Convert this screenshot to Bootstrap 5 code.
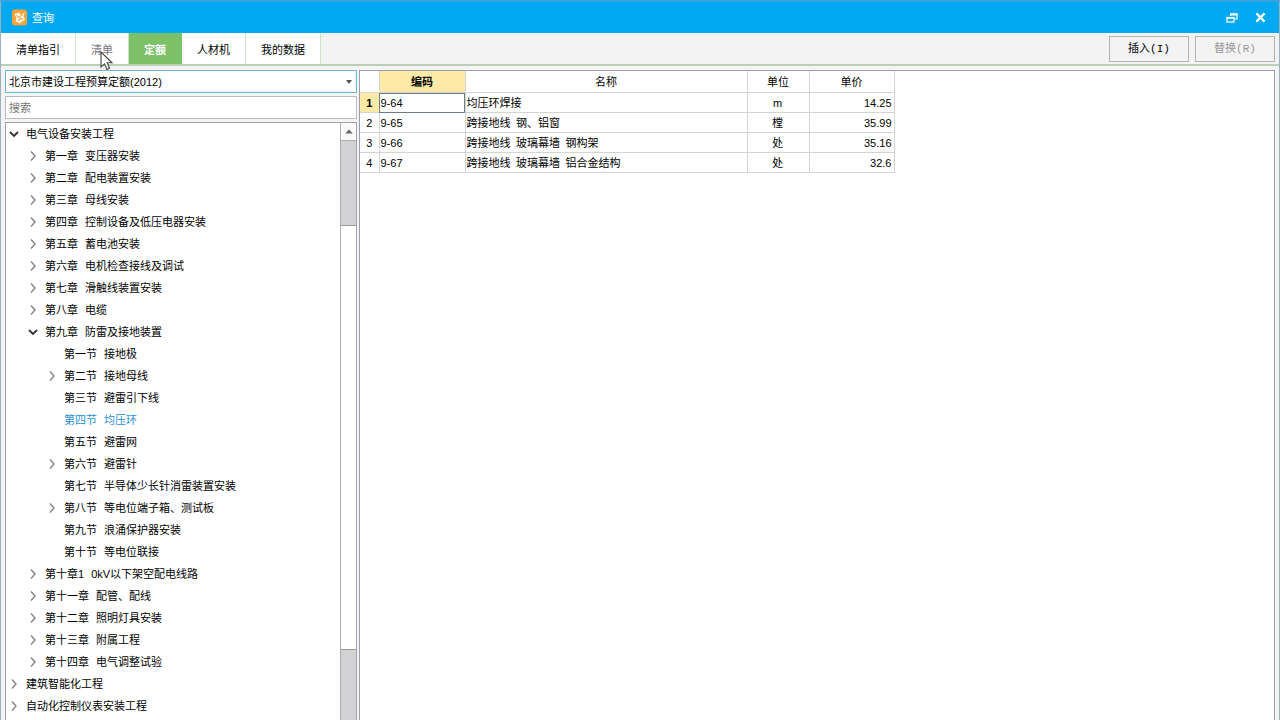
<!DOCTYPE html>
<html lang="zh-CN">
<head>
<meta charset="utf-8">
<meta name="viewport" content="width=device-width, initial-scale=1">
<title>查询</title>
<link href="https://cdn.jsdelivr.net/npm/bootstrap@5.3.0/dist/css/bootstrap.min.css" rel="stylesheet">
<style>
  body { font-family: "Liberation Sans", "Noto Sans CJK SC", sans-serif; font-size: 11px; line-height: 16px; color: #000; background: #f4f4f4; }
  .window { height: 100vh; border: 1px solid #9fb0bb; border-top: 2px solid #35a3dc; border-bottom: 0; }
  .titlebar { height: 31px; background: #00a9f2; color: #fff; padding: 0 11px 0 10px; }
  .title-btns { gap: 12px; }
  .title-btn { background: none; border: 0; padding: 0; width: 16px; height: 16px; line-height: 0; }
  .toolbar { height: 33px; background: #f3f3f3; border-bottom: 2px solid #bccdb8; }
  .tab-btn { background: #fff; border: 0; border-right: 1px solid #cfe3c4; padding: 3px 15px 0; color: #000; position: relative; }
  .tab-btn.active { background: #7cc068; color: #fff; font-weight: 700; border-right-color: #7cc068; }
  .tab-btn.hovered { color: #777; }
  .pointer { position: absolute; left: 24px; top: 18px; z-index: 5; }
  .tools { gap: 6px; }
  .tool-btn { width: 80px; height: 26px; border: 1px solid #b4b4b4; border-radius: 0; background: #f3f3f3; padding: 0; font-family: "Liberation Mono", "Noto Sans CJK SC", monospace; color: #000; }
  .tool-btn:disabled { color: #999; background: #f3f3f3; }
  .workspace { gap: 2px; }
  .side { width: 352px; gap: 3px; }
  .lib-select { height: 23px; padding: 0 20px 0 3px; border: 1px solid #74b4d6; border-radius: 0; font-size: 11px; line-height: 16px; color: #000; background-size: 6px 4px; background-position: right 4px center;
    background-image: url("data:image/svg+xml,%3csvg xmlns='http://www.w3.org/2000/svg' viewBox='0 0 6 4'%3e%3cpath fill='%23555' d='M0 0h6L3 4z'/%3e%3c/svg%3e"); }
  .search-input { height: 23px; padding: 0 3px; border: 1px solid #b9bcbf; border-radius: 0; font-size: 11px; line-height: 16px; }
  .search-input::placeholder { color: #777; }
  .tree-panel { background: #fff; border: 1px solid #9ea3a8; border-bottom: 0; }
  .tree ul { list-style: none; margin: 0; padding: 0 0 0 19px; }
  .tree > ul { padding-left: 1px; }
  .node { height: 22px; white-space: nowrap; }
  .label { margin-left: 6px; gap: 7px; }
  .twisty { width: 13px; height: 22px; padding: 0; border: 0; background: none; line-height: 0; flex: none; }
  .twisty svg { fill: none; stroke: #858585; stroke-width: 1.4; }
  .twisty.open svg { stroke: #333; stroke-width: 1.8; }
  .node.selected { color: #2a8fd8; }
  .scrollbar-v { width: 16px; background: #d3d3d5; border-left: 1px solid #aeaeb2; }
  .scroll-up { height: 18px; padding: 0; border: 0; border-bottom: 1px solid #aeaeb2; background: #fafafa; line-height: 0; }
  .thumb { background: #fff; border-top: 1px solid #999; border-bottom: 1px solid #999; }
  .grid-panel { background: #fff; border: 1px solid #9a9daa; border-bottom: 0; }
  .quota { border-collapse: collapse; table-layout: fixed; width: 534px; line-height: 16px; }
  .quota th, .quota td { border: 1px solid #d4d4d4; border-top: 0; padding: 2px 2px 1px 1px; white-space: nowrap; }
  .quota th:first-child { border-left: 0; }
  .quota thead th { font-weight: 400; text-align: center; padding: 3px 0 2px; }
  .quota thead th.current { background: #fdeaa6; font-weight: 700; }
  .quota tbody th { font-weight: 400; text-align: center; padding: 2px 0 1px; }
  .quota tbody th.current { background: #fdeaa6; font-weight: 700; }
  .quota td.focus-cell { outline: 1px solid #6f7c88; outline-offset: -1px; }
</style>
</head>
<body>
<svg width="0" height="0" class="d-none" aria-hidden="true">
  <symbol id="right" viewBox="0 0 10 10"><path d="M3 0.5 7 5 3 9.5"/></symbol>
  <symbol id="down" viewBox="0 0 10 10"><path d="M1 3 5 7 9 3"/></symbol>
</svg>
<div class="window d-flex flex-column overflow-hidden">
  <header class="titlebar d-flex align-items-center flex-shrink-0">
    <svg width="17" height="17" viewBox="0 0 17 17" aria-hidden="true"><rect x="1" y="0.5" width="15" height="16" rx="3" fill="#f2a33a"/><path d="M3.500 5 8 3.500 10 6 14 3 12.500 7 14 10.500 9 14.500 4.500 12.500 5.500 9Z" fill="#fff3dc"/><path d="M5.500 6.500 8 8.500 11.500 5.500M7.500 12 9 9.500 11.500 10" stroke="#e8892a" stroke-width="1" fill="none"/></svg>
    <span class="ms-1 me-auto">查询</span>
    <div class="title-btns d-flex">
      <button class="title-btn" aria-label="还原"><svg width="12" height="10" viewBox="0 0 12 10" fill="none" stroke="#fff"><path d="M4.500 3V1H11V6H8.500" stroke-width="1.2"/><path d="M4 1.500h7.500" stroke-width="2"/><rect x="1" y="4.500" width="7" height="4.500" stroke-width="1.2"/><path d="M.5 5h8" stroke-width="1.5"/></svg></button>
      <button class="title-btn" aria-label="关闭"><svg width="11" height="11" viewBox="0 0 12 12" stroke="#fff" stroke-width="2.4"><path d="M1.500 1.500 10.500 10.500M10.500 1.500 1.500 10.500"/></svg></button>
    </div>
  </header>
  <div class="toolbar d-flex flex-shrink-0">
    <nav class="d-flex me-auto">
      <button class="tab-btn">清单指引</button>
      <button class="tab-btn hovered">清单<svg class="pointer" width="14" height="20" viewBox="0 0 14 20" aria-hidden="true"><path d="M1 1V16L4.500 12.800 7 18.500 9.500 17.300 7.200 11.800H12Z" fill="#fff" stroke="#444" stroke-width="1.1"/></svg></button>
      <button class="tab-btn active">定额</button>
      <button class="tab-btn">人材机</button>
      <button class="tab-btn">我的数据</button>
    </nav>
    <div class="tools d-flex align-items-center pe-1">
      <button class="tool-btn">插入(I)</button>
      <button class="tool-btn" disabled>替换(R)</button>
    </div>
  </div>
  <main class="workspace d-flex flex-grow-1 overflow-hidden pt-1 px-1">
    <aside class="side d-flex flex-column flex-shrink-0">
      <select class="form-select lib-select flex-shrink-0" aria-label="定额库"><option>北京市建设工程预算定额(2012)</option></select>
      <input class="form-control search-input flex-shrink-0" type="text" placeholder="搜索" aria-label="搜索">
      <div class="tree-panel d-flex flex-grow-1 overflow-hidden">
        <div class="tree flex-grow-1 overflow-hidden">
          <ul id="tree"></ul>
        </div>
        <div class="scrollbar-v d-flex flex-column flex-shrink-0">
          <button class="scroll-up" aria-label="向上滚动"><svg width="8" height="5" viewBox="0 0 9 6"><path d="M0 5.500 4.500 0.5 9 5.500Z" fill="#667"/></svg></button>
          <div style="flex: 84"></div>
          <div class="thumb" style="flex: 424"></div>
          <div style="flex: 70"></div>
        </div>
      </div>
    </aside>
    <section class="grid-panel flex-grow-1 overflow-auto">
      <table class="quota">
        <colgroup><col style="width:19px"><col style="width:86px"><col style="width:282px"><col style="width:62px"><col style="width:85px"></colgroup>
        <thead><tr><th></th><th class="current">编码</th><th>名称</th><th>单位</th><th>单价</th></tr></thead>
        <tbody>
          <tr><th class="current">1</th><td class="focus-cell">9-64</td><td>均压环焊接</td><td class="text-center">m</td><td class="text-end">14.25</td></tr>
          <tr><th>2</th><td>9-65</td><td>跨接地线&ensp;钢、铝窗</td><td class="text-center">樘</td><td class="text-end">35.99</td></tr>
          <tr><th>3</th><td>9-66</td><td>跨接地线&ensp;玻璃幕墙&ensp;钢构架</td><td class="text-center">处</td><td class="text-end">35.16</td></tr>
          <tr><th>4</th><td>9-67</td><td>跨接地线&ensp;玻璃幕墙&ensp;铝合金结构</td><td class="text-center">处</td><td class="text-end">32.6</td></tr>
        </tbody>
      </table>
    </section>
  </main>
</div>
<script src="https://cdn.jsdelivr.net/npm/bootstrap@5.3.0/dist/js/bootstrap.bundle.min.js"></script>
<script>
  // state: "+" collapsed, "-" expanded, "" leaf, "*" selected leaf
  const chapters = [
    ["+", "第一章", "变压器安装"], ["+", "第二章", "配电装置安装"], ["+", "第三章", "母线安装"],
    ["+", "第四章", "控制设备及低压电器安装"], ["+", "第五章", "蓄电池安装"], ["+", "第六章", "电机检查接线及调试"],
    ["+", "第七章", "滑触线装置安装"], ["+", "第八章", "电缆"],
    ["-", "第九章", "防雷及接地装置", [
      ["", "第一节", "接地极"], ["+", "第二节", "接地母线"], ["", "第三节", "避雷引下线"], ["*", "第四节", "均压环"],
      ["", "第五节", "避雷网"], ["+", "第六节", "避雷针"], ["", "第七节", "半导体少长针消雷装置安装"],
      ["+", "第八节", "等电位端子箱、测试板"], ["", "第九节", "浪涌保护器安装"], ["", "第十节", "等电位联接"]]],
    ["+", "第十章1", "0kV以下架空配电线路"], ["+", "第十一章", "配管、配线"], ["+", "第十二章", "照明灯具安装"],
    ["+", "第十三章", "附属工程"], ["+", "第十四章", "电气调整试验"]
  ];
  const roots = [
    ["-", "", "电气设备安装工程", chapters], ["+", "", "建筑智能化工程"],
    ["+", "", "自动化控制仪表安装工程"], ["+", "", "通风空调工程"]
  ];
  const twisty = s => s === "-" ? '<button class="twisty open" aria-label="折叠"><svg width="10" height="10"><use href="#down"/></svg></button>'
    : s === "+" ? '<button class="twisty" aria-label="展开"><svg width="10" height="10"><use href="#right"/></svg></button>'
    : '<span class="twisty"></span>';
  const item = ([s, no, name, kids]) =>
    `<li><div class="node d-flex align-items-center${s === "*" ? " selected" : ""}">${twisty(s)}<span class="label d-flex">${no ? `<span>${no}</span>` : ""}<span>${name}</span></span></div>${kids ? `<ul>${kids.map(item).join("")}</ul>` : ""}</li>`;
  document.getElementById("tree").innerHTML = roots.map(item).join("");
</script>
</body>
</html>
